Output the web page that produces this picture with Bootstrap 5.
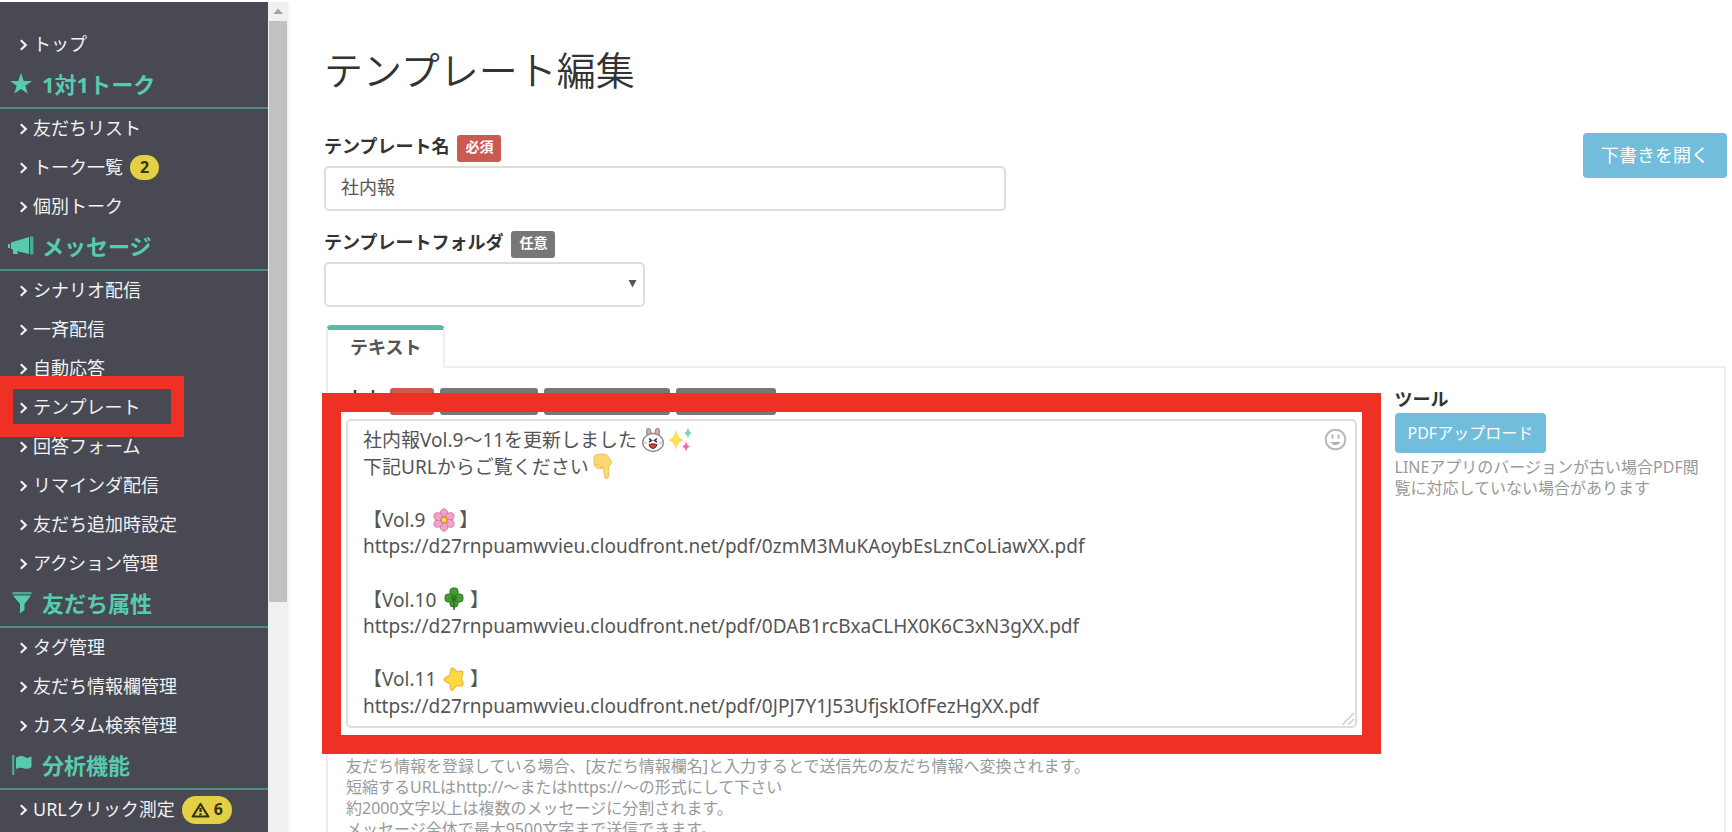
<!DOCTYPE html>
<html lang="ja">
<head>
<meta charset="utf-8">
<meta name="viewport" content="width=device-width, initial-scale=1">
<title>テンプレート編集</title>
<link href="https://cdn.jsdelivr.net/npm/bootstrap@5.3.0/dist/css/bootstrap.min.css" rel="stylesheet">
<style>
  body { font-family: "Noto Sans", "Noto Sans CJK JP", sans-serif; font-size: 18px; line-height: 27px; color: #333; background: #fff; }
  .side { width: 268px; background: #484953; padding-top: 23px; }
  .side a { display: flex; align-items: center; height: 39px; padding-left: 19px; gap: 5px; color: #f2f2f2; text-decoration: none; white-space: nowrap; }
  .side h2 { display: flex; align-items: center; height: 45px; margin: 0; padding: 0 0 4px 8px; gap: 8px; border-bottom: 2px solid #4d8c81; color: #57cbae; font-size: 22px; font-weight: 700; line-height: 30px; }
  .side h2 svg { width: 26px; height: 24px; }
  .chev { width: 9px; height: 12px; flex: none; }
  .count { display: inline-flex; align-items: center; gap: 4px; height: 25px; padding: 0 10px; margin-left: 2px; border-radius: 14px; background: #e3d044; color: #34330f; font-size: 16px; font-weight: 700; }
  .count-warn { height: 28px; padding: 0 9px; }
  .scrolltrack { width: 22px; background: #f0f0f0; border-right: 2px solid #f7f7f7; }
  .scrolltrack svg { display: block; width: 20px; height: 19px; }
  .thumb { height: 70%; margin: 0 1px; background: #c1c1c1; }
  .page-body { padding: 41px 5px 0 34px; min-width: 0; }
  h1 { font-size: 39px; line-height: 54px; font-weight: 350; margin: 0 0 36px; }
  .fields { --bs-gutter-x: 40px; }
  .folder-row { margin-top: 18px; }
  .field-head { display: flex; align-items: center; gap: 6px; height: 29px; margin-bottom: 4px; }
  .field-head label { font-weight: 700; margin: 0 2px 3px 0; }
  .tag { height: 27px; padding: 0 8px; border-radius: 3px; color: #fff; font-size: 14px; font-weight: 700; line-height: 24px; background: #777; margin-top: 1px; }
  .tag-req { background: #cb5a52; }
  .tag-a { width: 98px; } .tag-b { width: 126px; } .tag-c { width: 100px; }
  .tag-red { width: 44px; }
  .form-control, .form-select { height: 45px; padding: 4px 15px 10px; border: 2px solid #ddd; border-radius: 5px; color: #555; font-size: 18px; line-height: 27px; }
  .form-select { background-image: none; }
  .arrow { top: 17px; width: 9px; height: 9px; pointer-events: none; }
  .btn-sky { background: #72bddb; color: #fff; border: 0; border-radius: 4px; font-size: 18px; height: 45px; padding: 0 18px; }
  .btn-sky:hover { background: #5bb0d2; color: #fff; }
  .btn-pdf { font-size: 16px; height: 40px; padding: 0 13px; line-height: 22px; }
  .tab-row { margin: 18px 0 -2px 2px; border: 0; }
  .tab-row .nav-link, .tab-row .nav-link.active { height: 43px; padding: 2px 22px 6px; border: 2px solid #eee; border-top: 5px solid #5bbba2; border-bottom: 0; border-radius: 5px 5px 0 0; background: #fff; color: #555; font-weight: 700; line-height: 27px; margin: 0; }
  .panel { margin: 0 1px 0 2px; padding: 18px 18px 40px; border: 2px solid #eee; }
  .panel .fields { --bs-gutter-x: 38px; }
  .msg { display: block; height: 309px; padding: 6px 15px; font-size: 19px; line-height: 1.4; resize: none; }
  .frame { position: absolute; inset: -26px -24px; border: 19px solid #ee3124; pointer-events: none; }
  .frame-nav { inset: -12px 84px -10px 0; border-width: 13px; }
  .emo { position: absolute; width: 24px; height: 26px; pointer-events: none; }
  .face { top: 9px; right: 10px; padding: 0; border: 0; background: none; line-height: 0; }
  .grip { right: 3px; bottom: 3px; }
  .note { font-size: 16px; line-height: 21px; color: #999; margin: 0; }
  .note-body { padding-top: 28px; }
  .tool-head { font-weight: 700; line-height: 27px; }
</style>
</head>
<body>
<svg class="d-none">
  <symbol id="chev" viewBox="0 0 9 12"><path d="M1.8 1.2 6.8 6 1.8 10.8" fill="none" stroke="#f2f2f2" stroke-width="2.2"/></symbol>
</svg>
<div class="d-flex vh-100 overflow-hidden border-top border-2 border-white">
  <nav class="side flex-shrink-0 overflow-hidden" aria-label="メニュー">
    <a href="#"><svg class="chev"><use href="#chev"/></svg>トップ</a>
    <h2><svg viewBox="0 0 26 24"><path fill="currentColor" d="M13 1l2.700 7.900H24l-6.700 4.900 2.600 7.900L13 16.900l-6.900 4.800 2.600-7.900L2 8.900h8.300z"/></svg>1対1トーク</h2>
    <a href="#"><svg class="chev"><use href="#chev"/></svg>友だちリスト</a>
    <a href="#"><svg class="chev"><use href="#chev"/></svg>トーク一覧<span class="count">2</span></a>
    <a href="#"><svg class="chev"><use href="#chev"/></svg>個別トーク</a>
    <h2><svg viewBox="0 0 26 24"><path fill="currentColor" d="M0 10h2v4H0zM3 8.500 21 3v17l-10-2.500H9l1 2.500H5V15.500L3 15z"/><path d="M23.700 2.500v18" stroke="#4fa893" stroke-width="3.500"/></svg>メッセージ</h2>
    <a href="#"><svg class="chev"><use href="#chev"/></svg>シナリオ配信</a>
    <a href="#"><svg class="chev"><use href="#chev"/></svg>一斉配信</a>
    <a href="#"><svg class="chev"><use href="#chev"/></svg>自動応答</a>
    <a href="#" class="position-relative" aria-current="page"><svg class="chev"><use href="#chev"/></svg>テンプレート<span class="frame frame-nav"></span></a>
    <a href="#"><svg class="chev"><use href="#chev"/></svg>回答フォーム</a>
    <a href="#"><svg class="chev"><use href="#chev"/></svg>リマインダ配信</a>
    <a href="#"><svg class="chev"><use href="#chev"/></svg>友だち追加時設定</a>
    <a href="#"><svg class="chev"><use href="#chev"/></svg>アクション管理</a>
    <h2><svg viewBox="0 0 26 24"><path d="M4.500 2.200h19" stroke="#4fa893" stroke-width="2.500"/><path fill="currentColor" d="M5 4.500h18l-6.500 8.500v6L12 22.500V13z"/></svg>友だち属性</h2>
    <a href="#"><svg class="chev"><use href="#chev"/></svg>タグ管理</a>
    <a href="#"><svg class="chev"><use href="#chev"/></svg>友だち情報欄管理</a>
    <a href="#"><svg class="chev"><use href="#chev"/></svg>カスタム検索管理</a>
    <h2><svg viewBox="0 0 26 24"><path d="M5.200 2v20" stroke="#4fa893" stroke-width="2.200"/><path fill="currentColor" d="M8 5c4-3 7-2 9-.800 2 1 4.500.500 6.500-1v11c-3 2-5.500 2-8 1-2.500-.900-5-.500-7.500.800z"/></svg>分析機能</h2>
    <a href="#"><svg class="chev"><use href="#chev"/></svg>URLクリック測定<span class="count count-warn"><svg width="19" height="16" viewBox="0 0 19 16"><path d="M9.500 2 17.300 14.500H1.700z" fill="none" stroke="#34330f" stroke-width="2.200" stroke-linejoin="round"/><path d="M9.500 6v4M9.500 11.200v2" stroke="#34330f" stroke-width="2.200"/></svg>6</span></a>
  </nav>
  <div class="scrolltrack flex-shrink-0" aria-hidden="true">
    <svg viewBox="0 0 20 19"><path d="M5.500 12 10 6.500l5 5.500z" fill="#a3a3a3"/></svg>
    <div class="thumb"></div>
  </div>

  <main class="page-body flex-grow-1">
    <h1>テンプレート編集</h1>
    <div class="row fields">
      <div class="col-6">
        <div class="field-head"><label for="tplName">テンプレート名</label><span class="tag tag-req">必須</span></div>
        <input id="tplName" type="text" class="form-control" value="社内報">
      </div>
      <div class="col-auto ms-auto"><button type="button" class="btn btn-sky">下書きを開く</button></div>
    </div>
    <div class="row fields folder-row">
      <div class="col-3">
        <div class="field-head text-nowrap"><label for="tplFolder">テンプレートフォルダ</label><span class="tag">任意</span></div>
        <div class="position-relative">
          <select id="tplFolder" class="form-select"><option></option></select>
          <svg class="arrow position-absolute end-0 me-2" viewBox="0 0 9 9"><path d="M.5 1h8L4.500 8.500z" fill="#555"/></svg>
        </div>
      </div>
    </div>

    <ul class="nav nav-tabs tab-row"><li class="nav-item position-relative"><button type="button" class="nav-link active">テキスト</button></li></ul>
    <section class="panel">
      <div class="row fields">
        <div class="col-9">
          <div class="field-head"><label for="msgBody">本文</label><span class="tag tag-req tag-red"></span><span class="tag tag-a"></span><span class="tag tag-b"></span><span class="tag tag-c"></span></div>
          <div class="position-relative">
            <textarea id="msgBody" class="form-control msg">社内報Vol.9～11を更新しました
下記URLからご覧ください

【Vol.9&nbsp;　&nbsp;&nbsp;】
https://d27rnpuamwvieu.cloudfront.net/pdf/0zmM3MuKAoybEsLznCoLiawXX.pdf

【Vol.10&nbsp;　&nbsp;&nbsp;】
https://d27rnpuamwvieu.cloudfront.net/pdf/0DAB1rcBxaCLHX0K6C3xN3gXX.pdf

【Vol.11&nbsp;　&nbsp;&nbsp;】
https://d27rnpuamwvieu.cloudfront.net/pdf/0JPJ7Y1J53UfjskIOfFezHgXX.pdf</textarea>
            <!-- rabbit -->
            <svg class="emo" style="left:295px;top:8px" viewBox="0 0 24 26"><path d="M6.500 9C5 4 5.500 1.500 7.500 1.500S10 4 10 7M14 7c0-3 .5-5.500 2.500-5.500S19 4 17.500 9" fill="#f3a3b5" stroke="#888" stroke-width="1.200"/><ellipse cx="12" cy="15.500" rx="10.300" ry="9" fill="#fff" stroke="#888" stroke-width="1.300"/><path d="M8 11.500l2.500 2-2.500 1.500M16 11.500l-2.500 2 2.500 1.500" fill="none" stroke="#333" stroke-width="1.500"/><path d="M8 17.500q4-1.500 8 0-1 4-4 4t-4-4" fill="#d9453c" stroke="#6b2a22"/><circle cx="4.500" cy="16" r="1.300" fill="#f7b9c4"/><circle cx="19.500" cy="16" r="1.300" fill="#f7b9c4"/></svg>
            <!-- sparkles -->
            <svg class="emo" style="left:322px;top:8px" viewBox="0 0 24 26"><path d="M8 2q1 9 8 11-7 2-8 11-1-9-8-11 7-2 8-11" fill="#fbe05a"/><path d="M20 0q.7 5 4 6-3.300 1-4 6-.7-5-4-6 3.300-1 4-6" fill="#74d6bd"/><path d="M18 14q.7 4.500 4 5.500-3.300 1-4 5.500-.7-4.500-4-5.500 3.300-1 4-5.500" fill="#ef6db8"/></svg>
            <!-- hand pointing down -->
            <svg class="emo" style="left:245px;top:34px" viewBox="0 0 24 26"><path d="M3 4q.5-2 3-2.500l6-.5q4 0 6 3.500 2.500 3 2.500 6-1 2-3 2.500v10.500q0 2-2 2t-2-2L12.500 15q-1.500 1-3.500.5-2.500.5-4-1.500Q2.500 13 3 10.500z" fill="#fbd873" stroke="#f0c063"/><path d="M4.500 12q2-1.500 3.500-.5M9 15q1-2 3.500-1" fill="none" stroke="#e9b055"/></svg>
            <!-- blossom -->
            <svg class="emo" style="left:86px;top:88px" viewBox="0 0 24 26"><g fill="#f0a3cb" stroke="#d77aab"><ellipse cx="12" cy="6.500" rx="3.800" ry="4.700"/><ellipse cx="12" cy="6.500" rx="3.800" ry="4.700" transform="rotate(60 12 13)"/><ellipse cx="12" cy="6.500" rx="3.800" ry="4.700" transform="rotate(120 12 13)"/><ellipse cx="12" cy="6.500" rx="3.800" ry="4.700" transform="rotate(180 12 13)"/><ellipse cx="12" cy="6.500" rx="3.800" ry="4.700" transform="rotate(240 12 13)"/><ellipse cx="12" cy="6.500" rx="3.800" ry="4.700" transform="rotate(300 12 13)"/></g><circle cx="12" cy="13" r="3.200" fill="#f5d948" stroke="#c0713c"/></svg>
            <!-- clover -->
            <svg class="emo" style="left:96px;top:167px" viewBox="0 0 24 26"><g fill="#4a9a34" stroke="#2f7d22"><rect x="8" y="2" width="8" height="9" rx="3"/><rect x="8" y="13" width="8" height="8" rx="3"/><rect x="3" y="8" width="8" height="8" rx="3"/><rect x="13" y="8" width="8" height="8" rx="3"/></g><circle cx="12" cy="12" r="3" fill="#2f7d22"/><path d="M12 12v12" stroke="#2b6e1e" stroke-width="1.500"/></svg>
            <!-- star -->
            <svg class="emo" style="left:96px;top:247px" viewBox="0 0 24 26"><path d="M9 3q1.500-1.500 3 0l2.500 2.500 5-.5q2.500.5 1 3L19.500 13l1.500 5q0 2.500-2.500 2L14 20l-3 4q-2 1-2.500-1.500L8 18l-5-3q-2-1.500 0-3l5-3z" fill="#fcd93f" stroke="#efb53a" stroke-width="1.200" stroke-linejoin="round"/></svg>
            <button type="button" class="face position-absolute" aria-label="絵文字"><svg width="23" height="23" viewBox="0 0 23 23"><circle cx="11.500" cy="11.500" r="9.800" fill="none" stroke="#b9b9b9" stroke-width="2"/><path d="M8.500 6.500v4M14.500 6.500v4" stroke="#b9b9b9" stroke-width="2"/><path d="M6.500 14h10q-1.500 3-5 3t-5-3" fill="#b0b0b0"/></svg></button>
            <svg class="grip position-absolute" width="12" height="12" viewBox="0 0 12 12"><path d="M0 12 12 0M6 12l6-6" stroke="#ccc" stroke-width="1.500"/></svg>
            <div class="frame"></div>
          </div>
          <p class="note note-body text-nowrap">友だち情報を登録している場合、[友だち情報欄名]と入力するとで送信先の友だち情報へ変換されます。<br>短縮するURLはhttp://～またはhttps://～の形式にして下さい<br>約2000文字以上は複数のメッセージに分割されます。<br>メッセージ全体で最大9500文字まで送信できます。</p>
        </div>
        <div class="col-3">
          <div class="tool-head">ツール</div>
          <button type="button" class="btn btn-sky btn-pdf mb-1">PDFアップロード</button>
          <p class="note">LINEアプリのバージョンが古い場合PDF閲覧に対応していない場合があります</p>
        </div>
      </div>
    </section>
  </main>
</div>
<script src="https://cdn.jsdelivr.net/npm/bootstrap@5.3.0/dist/js/bootstrap.bundle.min.js"></script>
</body>
</html>
